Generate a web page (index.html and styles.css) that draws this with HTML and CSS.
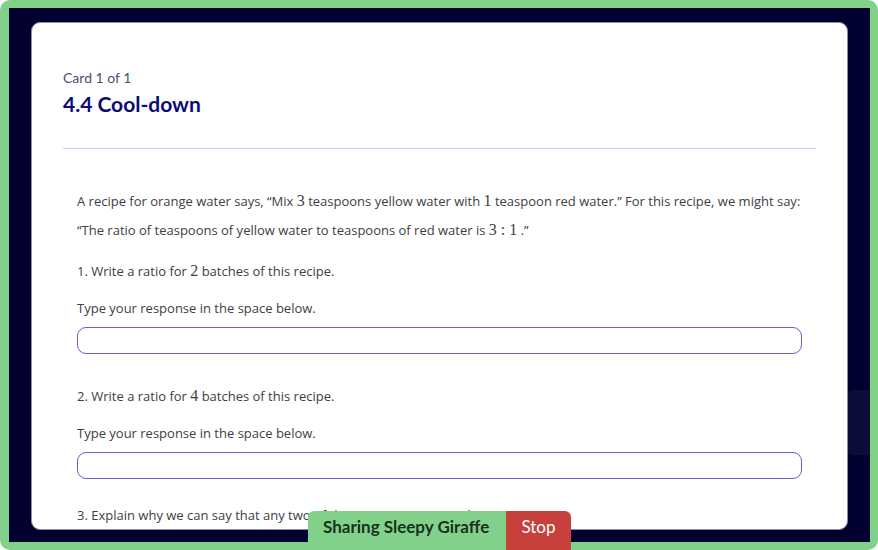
FILE: index.html
```html
<!DOCTYPE html>
<html lang="en">
<head>
<meta charset="utf-8">
<title>4.4 Cool-down</title>
<link rel="stylesheet" href="styles.css">
</head>
<body>
<div class="share-frame">
  <div class="stage">
    <div class="card">
      <header class="card-head">
        <div class="card-count">Card 1 of 1</div>
        <h1 class="card-title">4.4 Cool-down</h1>
      </header>
      <hr class="divider">
      <section class="content">
        <p class="intro">A recipe for orange water says, “Mix <span class="m">3</span> teaspoons yellow water with <span class="m">1</span> teaspoon red water.” For this recipe, we might say:</p>
        <p class="intro">“The ratio of teaspoons of yellow water to teaspoons of red water is <span class="m">3 : 1</span> .”</p>

        <p class="question">1. Write a ratio for <span class="m">2</span> batches of this recipe.</p>
        <p class="prompt">Type your response in the space below.</p>
        <input class="answer" type="text" aria-label="Response 1">

        <p class="question">2. Write a ratio for <span class="m">4</span> batches of this recipe.</p>
        <p class="prompt">Type your response in the space below.</p>
        <input class="answer" type="text" aria-label="Response 2">

        <p class="question last">3. Explain why we can say that any two of these ratios are equivalent.</p>
      </section>
    </div>
    <div class="side-tab"></div>
  </div>
  <div class="share-bar">
    <span class="share-label">Sharing Sleepy Giraffe</span>
    <button class="stop-btn" type="button">Stop</button>
  </div>
</div>
</body>
</html>
```

FILE: styles.css
```css
* {
  box-sizing: border-box;
}

html, body {
  margin: 0;
  height: 100%;
  background: #ffffff;
}

body {
  font-family: Lato, "Noto Sans", sans-serif;
}

.share-frame {
  position: relative;
  height: 550px;
  width: 878px;
  background: #82d18a;
  border-radius: 10px;
  padding: 8px 8px 8px 9px;
}

.stage {
  position: relative;
  height: 100%;
  background: #01002e;
  padding: 14px 22px 12px 22px;
}

.card {
  height: 100%;
  background: #ffffff;
  border: 1px solid #8c8ba6;
  border-radius: 9px;
  overflow: hidden;
  padding: 46px 31px 0 31px;
}

.card-count {
  font-size: 14px;
  color: #4b4f6c;
  line-height: 18px;
}

.card-title {
  margin: 5px 0 0;
  font-size: 21px;
  font-weight: 700;
  color: #0b0a7c;
  line-height: 24px;
}

.divider {
  margin: 32px 0 0;
  height: 0;
  border: 0;
  border-top: 1px solid #c3ccff;
}

.content {
  padding: 38px 14px 0;
  color: #3e3e44;
  font-family: "Open Sans", Lato, sans-serif;
  font-size: 13px;
}

.content p {
  margin: 0;
  white-space: nowrap;
}

.intro {
  line-height: 29px;
}

.m {
  font-family: "Liberation Serif", "DejaVu Serif", serif;
  font-size: 16px;
  line-height: 1;
}

.question {
  margin-top: 12px !important;
  line-height: 29px;
}

.prompt {
  margin-top: 8px !important;
  line-height: 29px;
}

.answer {
  display: block;
  width: 100%;
  height: 27px;
  margin: 4px 0 0;
  border: 1px solid #6a5fd0;
  border-radius: 9px;
  background: #ffffff;
  outline: none;
}

.answer + .question {
  margin-top: 28px !important;
}

.answer + .question.last {
  margin-top: 22px !important;
}

.side-tab {
  position: absolute;
  right: 0;
  top: 382px;
  width: 22px;
  height: 65px;
  background: #0d0c38;
  border-radius: 4px 0 0 4px;
}

.share-bar {
  position: absolute;
  left: 308px;
  bottom: 0;
  display: flex;
  height: 39px;
}

.share-label {
  display: flex;
  align-items: center;
  padding: 0 0 8px 15px;
  background: #82d18a;
  color: #18321c;
  font-weight: 700;
  font-size: 17px;
  border-radius: 6px 0 0 0;
  width: 198px;
}

.stop-btn {
  width: 65px;
  border: 0;
  background: #c8403c;
  color: #ffffff;
  font-family: Lato, "Noto Sans", sans-serif;
  font-size: 17px;
  border-radius: 0 6px 0 0;
  padding: 0 0 8px;
}
```
